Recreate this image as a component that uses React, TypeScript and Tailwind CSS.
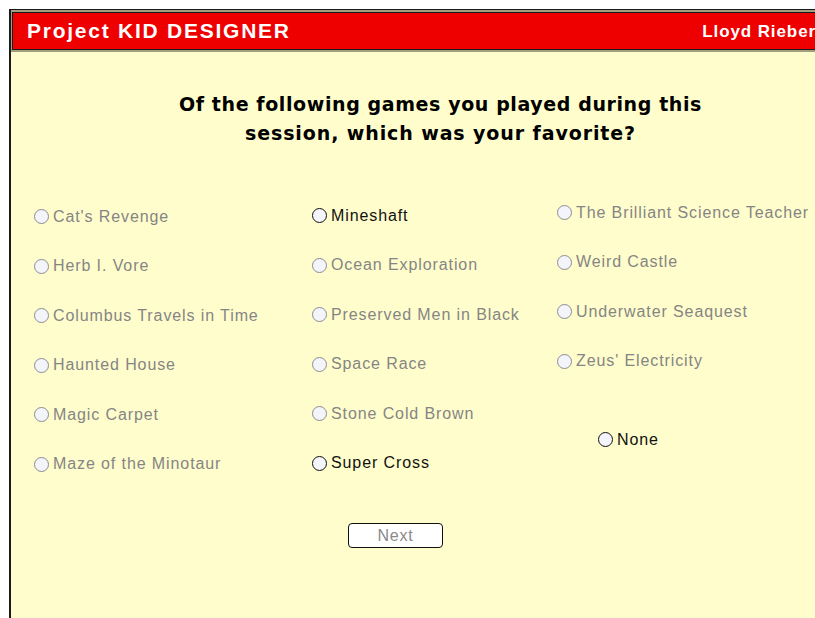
import React from 'react';

type Game = { name: string; active?: boolean };

const colOne: Game[] = [
  { name: "Cat's Revenge" },
  { name: 'Herb I. Vore' },
  { name: 'Columbus Travels in Time' },
  { name: 'Haunted House' },
  { name: 'Magic Carpet' },
  { name: 'Maze of the Minotaur' },
];

const colTwo: Game[] = [
  { name: 'Mineshaft', active: true },
  { name: 'Ocean Exploration' },
  { name: 'Preserved Men in Black' },
  { name: 'Space Race' },
  { name: 'Stone Cold Brown' },
  { name: 'Super Cross', active: true },
];

const colThree: Game[] = [
  { name: 'The Brilliant Science Teacher' },
  { name: 'Weird Castle' },
  { name: 'Underwater Seaquest' },
  { name: "Zeus' Electricity" },
];

const Radio: React.FC<{ game: Game }> = ({ game }) => (
  <label className="flex items-center gap-[4px] h-[49.5px] whitespace-nowrap">
    <span
      className={
        game.active
          ? 'block shrink-0 w-[15px] h-[15px] rounded-full border-[1.5px] border-[#111] bg-[#f4f4fb]'
          : 'block shrink-0 w-[15px] h-[15px] rounded-full border-[1.5px] border-[#8c8c94] bg-[#f4f4fb]'
      }
    />
    <span
      className={
        game.active
          ? 'text-[16px] tracking-[0.9px] text-[#111]'
          : 'text-[16px] tracking-[0.9px] text-[#858585]'
      }
    >
      {game.name}
    </span>
  </label>
);

export default function App() {
  return (
    <div
      className="w-[815px] h-[618px] overflow-hidden bg-white pt-[9px] pl-[9px]"
      style={{ fontFamily: '"Liberation Sans", Arial, sans-serif' }}
    >
      <div className="w-[870px] h-full border-l-2 border-t border-[#1a1a1a] bg-[#fffdcb] flex flex-col">
        {/* Title bar */}
        <div className="border-y-2 border-l border-[#a29f80]">
          <div className="h-[38px] border border-[#1a1a1a] bg-[#ee0000] flex items-center justify-between pl-[14px] pr-[62px] text-white font-bold">
            <span className="text-[21px] tracking-[1.75px]">Project KID DESIGNER</span>
            <span className="text-[17px] tracking-[0.9px] pt-[1px]">Lloyd Rieber</span>
          </div>
        </div>

        {/* Question */}
        <div
          className="pt-[38px] pr-[9px] text-center text-[19px] leading-[29px] text-black font-semibold tracking-[0.6px]"
          style={{ fontFamily: '"DejaVu Sans", Verdana, sans-serif' }}
        >
          <p>Of the following games you played during this</p>
          <p className="tracking-[0.9px]">session, which was your favorite?</p>
        </div>

        {/* Choices */}
        <div className="flex pl-[23px] pt-[44px]">
          <div className="w-[278px] flex flex-col">
            {colOne.map((g) => (
              <Radio key={g.name} game={g} />
            ))}
          </div>
          <div className="w-[245px] flex flex-col -mt-[1px]">
            {colTwo.map((g) => (
              <Radio key={g.name} game={g} />
            ))}
          </div>
          <div className="flex flex-col -mt-[4px]">
            {colThree.map((g) => (
              <Radio key={g.name} game={g} />
            ))}
            <div className="pl-[41px] pt-[29px]">
              <Radio game={{ name: 'None', active: true }} />
            </div>
          </div>
        </div>

        {/* Next */}
        <div className="pl-[337px] pt-[34px]">
          <button className="w-[95px] h-[25px] rounded-[4px] border-[1.5px] border-[#111] bg-white text-[16px] tracking-[0.8px] text-[#8a8a8a] leading-none">
            Next
          </button>
        </div>
      </div>
    </div>
  );
}
